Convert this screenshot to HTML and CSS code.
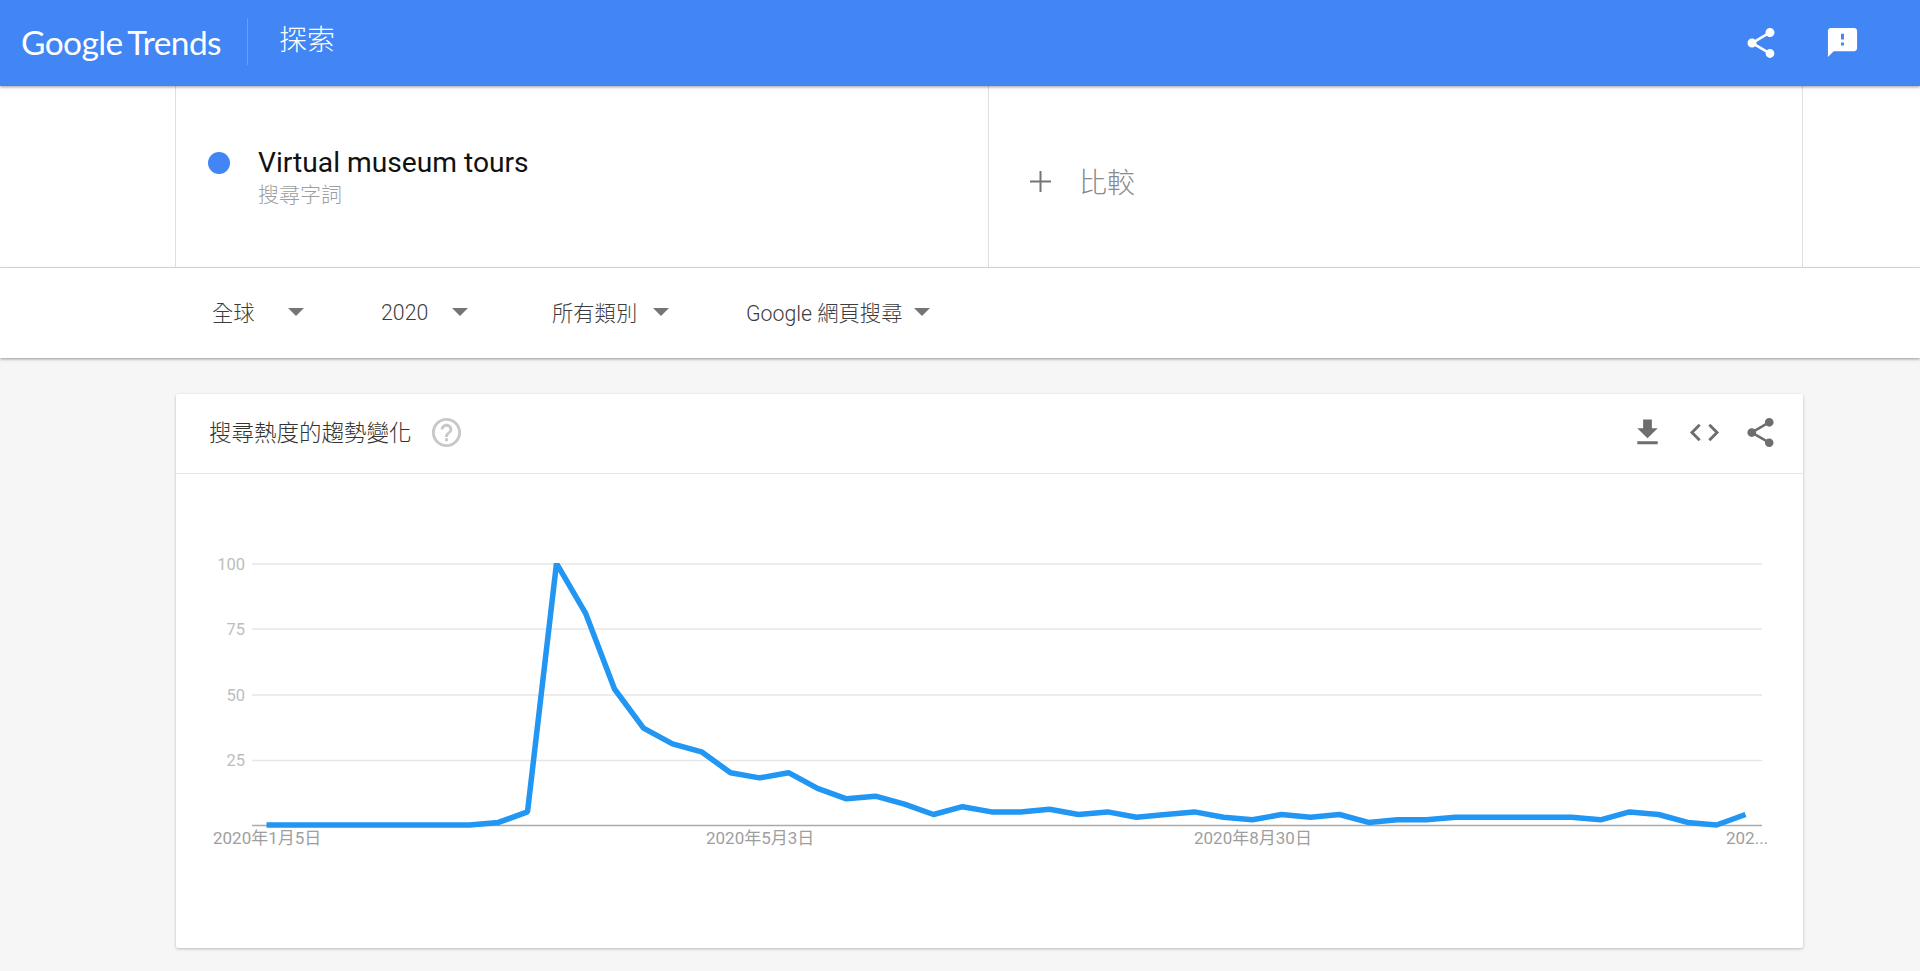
FILE: index.html
```html
<!DOCTYPE html>
<html lang="zh-Hant">
<head>
    <meta charset="UTF-8">
    <title>Google Trends</title>
    <link rel="stylesheet" href="styles.css">
</head>
<body>
    <header class="topbar">
        <div class="logo"><span class="logo-google">Google</span> <span class="logo-trends">Trends</span></div>
        <div class="topbar-divider"></div>
        <div class="topbar-title">探索</div>
        <div class="topbar-icons">
            <svg class="icon-share-top" viewBox="0 0 24 24"><path d="M18 16.08c-.76 0-1.44.3-1.96.77L8.91 12.7c.05-.23.09-.46.09-.7s-.04-.47-.09-.7l7.05-4.11c.54.5 1.25.81 2.04.81 1.66 0 3-1.34 3-3s-1.34-3-3-3-3 1.34-3 3c0 .24.04.47.09.7L8.04 9.81C7.5 9.31 6.79 9 6 9c-1.66 0-3 1.34-3 3s1.34 3 3 3c.79 0 1.5-.31 2.04-.81l7.12 4.16c-.05.21-.08.43-.08.65 0 1.61 1.31 2.92 2.92 2.92 1.61 0 2.92-1.31 2.92-2.92s-1.31-2.92-2.92-2.92z"/></svg>
            <svg class="icon-feedback" viewBox="0 0 24 24"><path d="M20 2H4c-1.1 0-1.99.9-1.99 2L2 22l4-4h14c1.1 0 2-.9 2-2V4c0-1.1-.9-2-2-2zm-7 12h-2v-2h2v2zm0-4h-2V6h2v4z"/></svg>
        </div>
    </header>

    <section class="compare-bar">
        <div class="compare-inner">
            <div class="term-cell">
                <span class="term-dot"></span>
                <div class="term-text">
                    <div class="term-name">Virtual museum tours</div>
                    <div class="term-type">搜尋字詞</div>
                </div>
            </div>
            <div class="add-cell">
                <svg class="icon-plus" viewBox="0 0 21 21"><path d="M9.5 0h2v9.5H21v2h-9.5V21h-2v-9.5H0v-2h9.5z"/></svg>
                <span class="add-label">比較</span>
            </div>
        </div>
    </section>

    <section class="filters">
        <div class="filter filter-geo"><span>全球</span><i class="caret"></i></div>
        <div class="filter filter-year"><span>2020</span><i class="caret"></i></div>
        <div class="filter filter-cat"><span>所有類別</span><i class="caret"></i></div>
        <div class="filter filter-type"><span>Google 網頁搜尋</span><i class="caret"></i></div>
    </section>

    <main class="content">
        <div class="card">
            <div class="card-header">
                <h2 class="card-title">搜尋熱度的趨勢變化</h2>
                <svg class="icon-help" viewBox="0 0 24 24"><path d="M11 18h2v-2h-2v2zm1-16C6.48 2 2 6.48 2 12s4.48 10 10 10 10-4.48 10-10S17.52 2 12 2zm0 18c-4.41 0-8-3.59-8-8s3.59-8 8-8 8 3.59 8 8-3.59 8-8 8zm0-14c-2.21 0-4 1.79-4 4h2c0-1.1.9-2 2-2s2 .9 2 2c0 2-3 1.75-3 5h2c0-2.25 3-2.5 3-5 0-2.21-1.79-4-4-4z"/></svg>
                <div class="card-actions">
                    <svg class="icon-action" viewBox="0 0 24 24"><path d="M19 9h-4V3H9v6H5l7 7 7-7zM5 18v2h14v-2H5z"/></svg>
                    <svg class="icon-action" viewBox="0 0 24 24"><path d="M9.4 16.6L4.8 12l4.6-4.6L8 6l-6 6 6 6 1.4-1.4zm5.2 0l4.6-4.6-4.6-4.6L16 6l6 6-6 6-1.4-1.4z"/></svg>
                    <svg class="icon-action" viewBox="0 0 24 24"><path d="M18 16.08c-.76 0-1.44.3-1.96.77L8.91 12.7c.05-.23.09-.46.09-.7s-.04-.47-.09-.7l7.05-4.11c.54.5 1.25.81 2.04.81 1.66 0 3-1.34 3-3s-1.34-3-3-3-3 1.34-3 3c0 .24.04.47.09.7L8.04 9.81C7.5 9.31 6.79 9 6 9c-1.66 0-3 1.34-3 3s1.34 3 3 3c.79 0 1.5-.31 2.04-.81l7.12 4.16c-.05.21-.08.43-.08.65 0 1.61 1.31 2.92 2.92 2.92 1.61 0 2.92-1.31 2.92-2.92s-1.31-2.92-2.92-2.92z"/></svg>
                </div>
            </div>
            <svg class="chart" viewBox="176 474 1627 474">
                <defs>
                    <clipPath id="plot-area"><rect x="252" y="563" width="1510" height="270"/></clipPath>
                </defs>
                <line class="grid" x1="252" y1="564" x2="1762" y2="564"/>
                <line class="grid" x1="252" y1="629" x2="1762" y2="629"/>
                <line class="grid" x1="252" y1="695" x2="1762" y2="695"/>
                <line class="grid" x1="252" y1="760.5" x2="1762" y2="760.5"/>
                <line class="baseline" x1="252" y1="825.5" x2="1762" y2="825.5"/>
                <text class="y-label" x="245" y="570">100</text>
                <text class="y-label" x="245" y="635">75</text>
                <text class="y-label" x="245" y="701">50</text>
                <text class="y-label" x="245" y="766">25</text>
                <text class="x-label" x="213" y="844">2020年1月5日</text>
                <text class="x-label" x="706" y="844">2020年5月3日</text>
                <text class="x-label" x="1194" y="844">2020年8月30日</text>
                <text class="x-label" x="1726" y="844">202...</text>
                <polyline class="trend" clip-path="url(#plot-area)" points="266.5,825 295.5,825 324.5,825 353.5,825 382.5,825 411.5,825 440.5,825 469.5,825 498.5,822.4 527.5,811.9 556.5,563.4 585.5,613.1 614.5,689 643.5,728.2 672.5,743.9 701.5,751.8 730.5,772.7 759.5,777.9 788.5,772.7 817.5,788.4 846.5,798.8 875.5,796.2 904.5,804.1 933.5,814.5 962.5,806.7 991.5,811.9 1020.5,811.9 1049.5,809.3 1078.5,814.5 1107.5,811.9 1136.5,817.2 1165.5,814.5 1194.5,811.9 1223.5,817.2 1252.5,819.8 1281.5,814.5 1310.5,817.2 1339.5,814.5 1368.5,822.4 1397.5,819.8 1426.5,819.8 1455.5,817.2 1484.5,817.2 1513.5,817.2 1542.5,817.2 1571.5,817.2 1600.5,819.8 1629.5,811.9 1658.5,814.5 1687.5,822.4 1716.5,825 1745.5,814.5"/>
            </svg>
        </div>
    </main>
</body>
</html>
```
FILE: styles.css
```css
* {
    box-sizing: border-box;
}
html, body {
    margin: 0;
    height: 100%;
}
body {
    background-color: #f6f6f6;
    font-family: Roboto, "Noto Sans CJK TC", sans-serif;
    color: #212121;
    overflow: hidden;
}
svg {
    display: block;
}

/* top bar */
.topbar {
    position: relative;
    z-index: 2;
    display: flex;
    align-items: center;
    height: 86px;
    padding-left: 21px;
    background-color: #4285f4;
    box-shadow: 0 1px 3px rgba(0,0,0,0.4);
    color: #fff;
}
.logo {
    width: 200px;
    font-size: 33.5px;
    letter-spacing: -0.6px;
    word-spacing: -3px;
    white-space: nowrap;
    margin-top: -2px;
}
.logo-google {
    font-family: Lato, sans-serif;
    font-weight: 400;
}
.logo-trends {
    font-family: Lato, sans-serif;
    font-weight: 400;
}
.topbar-divider {
    width: 1px;
    height: 47px;
    margin: -4px 0 0 26px;
    background-color: rgba(255,255,255,0.2);
}
.topbar-title {
    margin: -10px 0 0 31px;
    font-size: 28px;
    font-weight: 300;
}
.topbar-icons {
    display: flex;
    align-items: center;
    margin-left: auto;
    padding-right: 60px;
    fill: #fff;
}
.icon-share-top {
    width: 36px;
    height: 36px;
}
.icon-feedback {
    width: 35px;
    height: 35px;
    margin: -2px 0 0 46px;
}

/* term and compare */
.compare-bar {
    height: 182px;
    padding-left: 175px;
    background-color: #fff;
    border-bottom: 1px solid #e0e0e0;
}
.compare-inner {
    display: flex;
    width: 1628px;
    height: 100%;
    border-left: 1px solid #e0e0e0;
    border-right: 1px solid #e0e0e0;
}
.term-cell {
    display: flex;
    align-items: flex-start;
    width: 813px;
    padding: 66px 0 0 32px;
    border-right: 1px solid #e0e0e0;
}
.term-dot {
    flex: none;
    width: 22px;
    height: 22px;
    border-radius: 50%;
    background-color: #4285f4;
}
.term-text {
    margin: -8px 0 0 28px;
}
.term-name {
    font-size: 28.2px;
    line-height: 38px;
    color: #111;
}
.term-type {
    font-size: 21px;
    line-height: 26px;
    color: #9e9e9e;
    font-weight: 300;
}
.add-cell {
    display: flex;
    align-items: center;
    padding: 8px 0 0 41px;
}
.icon-plus {
    width: 21px;
    height: 21px;
    margin-top: 1px;
    fill: #757575;
}
.add-label {
    margin-left: 28px;
    font-size: 28px;
    font-weight: 300;
    color: #8a8a8a;
}

/* filters */
.filters {
    position: relative;
    z-index: 1;
    display: flex;
    align-items: center;
    height: 90px;
    padding: 0 0 2px 212px;
    background-color: #fff;
    box-shadow: 0 1px 3px rgba(0,0,0,0.4);
    font-size: 21.3px;
    font-weight: 300;
    color: #3c3c3c;
}
.filter {
    display: flex;
    align-items: center;
    white-space: nowrap;
}
.filter span {
    display: block;
    margin-top: -1px;
}
.caret {
    display: block;
    width: 0;
    height: 0;
    margin-top: -1px;
    border-left: 8px solid transparent;
    border-right: 8px solid transparent;
    border-top: 8px solid #757575;
}
.filter-year span {
    margin: 0 0 0 -1px;
}
.filter-geo { width: 170px; }
.filter-geo .caret { margin-left: 33px; }
.filter-year { width: 170px; }
.filter-year .caret { margin-left: 24px; }
.filter-cat { width: 194px; }
.filter-cat .caret { margin-left: 16px; }
.filter-type .caret { margin-left: 12px; }

/* card */
.content {
    padding: 36px 117px 0 176px;
}
.card {
    height: 554px;
    background-color: #fff;
    border-radius: 2px;
    box-shadow: 0 1px 3px rgba(0,0,0,0.25);
}
.card-header {
    display: flex;
    align-items: center;
    height: 80px;
    padding: 0 25px 3px 33px;
    border-bottom: 1px solid #e6e6e6;
}
.card-title {
    margin: -3px 0 0;
    font-size: 22.5px;
    font-weight: 300;
    color: #333;
}
.icon-help {
    width: 35px;
    height: 35px;
    margin-left: 17px;
    fill: #c8c8c8;
}
.card-actions {
    display: flex;
    gap: 21.5px;
    margin-left: auto;
    fill: #6e6e6e;
}
.icon-action {
    width: 35px;
    height: 35px;
}
.chart {
    width: 1627px;
    height: 474px;
}
.grid {
    stroke: #e6e6e6;
    stroke-width: 1.5;
}
.baseline {
    stroke: #aaa;
    stroke-width: 1.5;
}
.y-label {
    font-size: 16.5px;
    fill: #bdbdbd;
    text-anchor: end;
}
.x-label {
    font-size: 17px;
    fill: #9e9e9e;
}
.trend {
    fill: none;
    stroke: #2196f3;
    stroke-width: 5.5;
    stroke-linejoin: bevel;
}
```
